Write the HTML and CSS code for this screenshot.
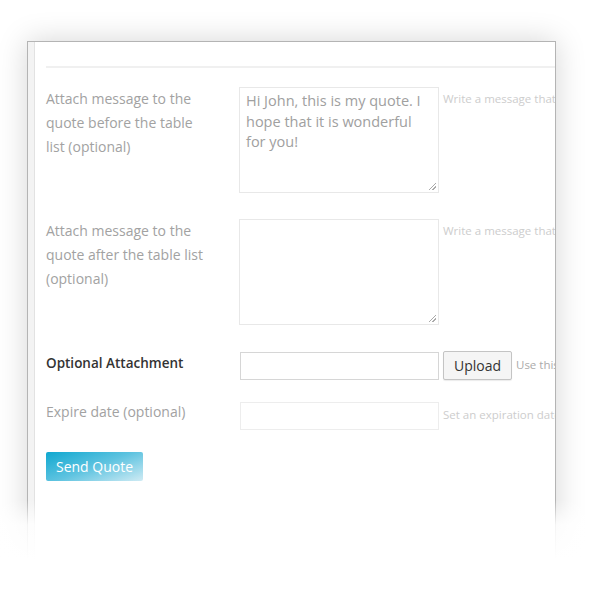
FILE: index.html
```html
<!DOCTYPE html>
<html>
<head>
<meta charset="utf-8">
<link rel="stylesheet" href="styles.css">
</head>
<body>
<div class="frame">
  <div class="strip"></div>
  <div class="content">
    <div class="sep"></div>
    <div class="form">
      <div class="row r1">
        <div class="label">Attach message to the quote before the table list (optional)</div>
        <div class="textarea">Hi John, this is my quote. I hope that it is wonderful for you!<span class="grip"></span></div>
        <div class="help">Write a message that will be shown before the table</div>
      </div>
      <div class="row r2">
        <div class="label">Attach message to the quote after the table list (optional)</div>
        <div class="textarea"><span class="grip"></span></div>
        <div class="help">Write a message that will be shown after the table</div>
      </div>
      <div class="row r3">
        <div class="label dark">Optional Attachment</div>
        <div class="input"></div>
        <div class="upload">Upload</div>
        <div class="help up">Use this to attach a file</div>
      </div>
      <div class="row r4">
        <div class="label">Expire date (optional)</div>
        <div class="input light"></div>
        <div class="help">Set an expiration date for this quote</div>
      </div>
    </div>
    <div class="send">Send Quote</div>
  </div>
</div>
<div class="fade"></div>
</body>
</html>
```

FILE: styles.css
```css
html, body {
  margin: 0;
  padding: 0;
  background: #fff;
  font-family: "Open Sans", "Noto Sans", sans-serif;
  overflow: hidden;
}
body {
  width: 600px;
  height: 599px;
  position: relative;
}
.frame {
  margin: 41px 0 0 27px;
  width: 527px;
  height: 520px;
  border: 1px solid #b4b4b4;
  border-bottom: none;
  display: flex;
  overflow: hidden;
  background: #fff;
  box-shadow: 0 0 28px rgba(0, 0, 0, 0.17);
}
.strip {
  width: 6px;
  flex: none;
  background: #f3f3f3;
  border-right: 1px solid #e2e2e2;
}
.content {
  flex: 1;
  padding-left: 11px;
  min-width: 0;
}
.sep {
  height: 2px;
  background: #f0f0f0;
  margin-top: 24px;
}
.form {
  display: flex;
  flex-direction: column;
  margin-top: 19px;
}
.row {
  display: flex;
  align-items: flex-start;
}
.r2 { margin-top: 26px; }
.r3 { margin-top: 27px; }
.r4 { margin-top: 22px; }
.label {
  width: 166px;
  padding-right: 27px;
  flex: none;
  font-size: 14px;
  font-weight: 400;
  color: #a2a2a2;
  line-height: 24px;
}
.label.dark {
  color: #333;
  font-size: 13.5px;
  font-weight: 600;
}
.r3 .label { margin-top: -1px; }
.r4 .label { margin-top: -2px; }
.textarea {
  flex: none;
  width: 188px;
  height: 101px;
  padding: 3px 4px 0 6px;
  border: 1px solid #e8e8e8;
  font-size: 14.5px;
  line-height: 20.5px;
  color: #a0a0a0;
  position: relative;
}
.grip {
  position: absolute;
  right: 2px;
  bottom: 2px;
  width: 7px;
  height: 7px;
  background: linear-gradient(135deg, transparent 45%, #aaa 45%, #aaa 55%, transparent 55%, transparent 70%, #aaa 70%, #aaa 80%, transparent 80%);
}
.input {
  flex: none;
  width: 197px;
  height: 26px;
  margin-left: 1px;
  border: 1px solid #d6d6d6;
}
.input.light {
  border-color: #ededed;
}
.upload {
  flex: none;
  margin: -1px 0 0 4px;
  height: 29px;
  width: 69px;
  box-sizing: border-box;
  border: 1px solid #c4c4c4;
  border-radius: 2px;
  background: #f5f5f5;
  font-size: 14px;
  color: #333;
  line-height: 27px;
  text-align: center;
  box-shadow: 0 1px 1px rgba(0,0,0,0.08);
}
.help {
  font-size: 11.5px;
  color: #cdcdcd;
  white-space: nowrap;
  line-height: 16px;
  padding-left: 4px;
  margin-top: 4px;
}
.r3 .help, .r4 .help { margin-top: 5px; }
.help.up {
  color: #ababab;
  padding-left: 4px;
}
.send {
  margin-top: 22px;
  width: 97px;
  height: 29px;
  border-radius: 2px;
  background: linear-gradient(160deg, #0fa8d0 0%, #5ec3e0 50%, #cfebf4 100%);
  color: #fff;
  font-size: 14px;
  line-height: 29px;
  text-align: center;
}
.fade {
  position: absolute;
  left: 0;
  right: 0;
  top: 500px;
  height: 99px;
  background: linear-gradient(to bottom, rgba(255,255,255,0) 0%, rgba(255,255,255,0.85) 25%, #fff 60%);
}
```
